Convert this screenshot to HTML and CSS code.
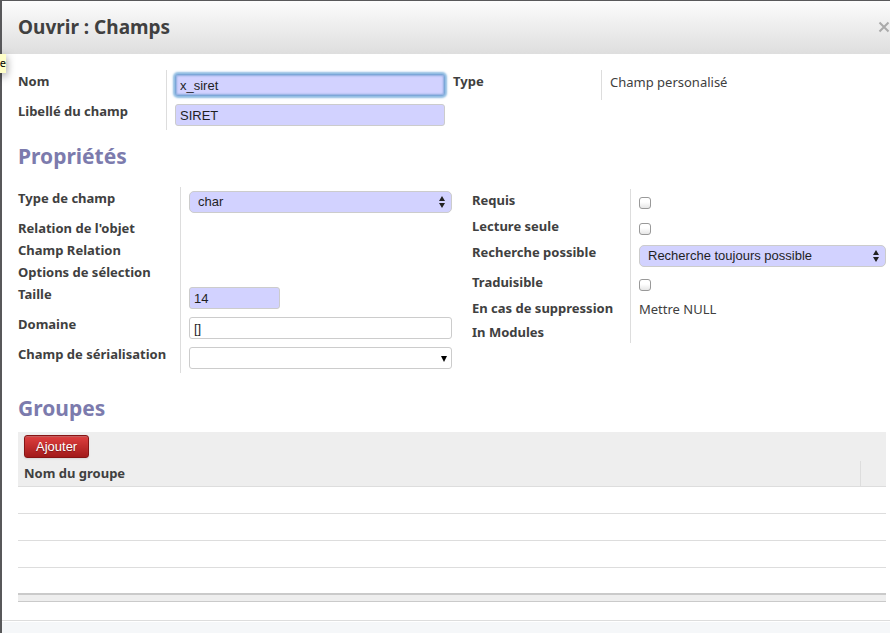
FILE: index.html
```html
<!DOCTYPE html>
<html lang="fr">
<head>
<meta charset="utf-8">
<title>Ouvrir : Champs</title>
<link rel="stylesheet" href="styles.css">
</head>
<body>
<div class="tooltip">e</div>
<main class="dialog">
  <header class="dialog-header">
    <h1>Ouvrir : Champs</h1>
    <button class="close" type="button" aria-label="Fermer">
      <svg width="12" height="12" viewBox="0 0 12 12"><path d="M1.5 1.5l9 9M10.5 1.5l-9 9" stroke="#aaa" stroke-width="2" fill="none"/></svg>
    </button>
  </header>

  <form class="content">
    <div class="columns identity">
      <div class="group">
        <div class="row"><label for="name">Nom</label><div class="cell"><input class="field required active" id="name" type="text" value="x_siret"></div></div>
        <div class="row"><label for="caption">Libellé du champ</label><div class="cell"><input class="field required" id="caption" type="text" value="SIRET"></div></div>
      </div>
      <div class="group">
        <div class="row"><span class="label">Type</span><div class="cell"><span class="value">Champ personalisé</span></div></div>
      </div>
    </div>

    <h2>Propriétés</h2>
    <div class="columns properties">
      <div class="group">
        <div class="row"><label for="type">Type de champ</label><div class="cell"><div class="picker"><select class="field required" id="type"><option>char</option></select><svg class="arrows" width="6" height="12" viewBox="0 0 6 12"><path d="M0 5l3-5 3 5zM0 7h6l-3 5z" fill="#222"/></svg></div></div></div>
        <div class="row compact"><span class="label">Relation de l'objet</span><div class="cell"></div></div>
        <div class="row compact"><span class="label">Champ Relation</span><div class="cell"></div></div>
        <div class="row compact"><span class="label">Options de sélection</span><div class="cell"></div></div>
        <div class="row"><label for="size">Taille</label><div class="cell"><input class="field required short" id="size" type="text" value="14"></div></div>
        <div class="row"><label for="domain">Domaine</label><div class="cell"><input class="field" id="domain" type="text" value="[]"></div></div>
        <div class="row"><label for="serial">Champ de sérialisation</label><div class="cell"><div class="picker"><input class="field" id="serial" type="text"><button class="drop" type="button" aria-label="Ouvrir la liste"><svg width="6" height="6" viewBox="0 0 6 6"><path d="M0 0h6l-3 6z" fill="#000"/></svg></button></div></div></div>
      </div>
      <div class="group options">
        <div class="row check"><label for="required">Requis</label><div class="cell"><input class="box" id="required" type="checkbox"></div></div>
        <div class="row check"><label for="readonly">Lecture seule</label><div class="cell"><input class="box" id="readonly" type="checkbox"></div></div>
        <div class="row"><label for="search">Recherche possible</label><div class="cell"><div class="picker"><select class="field required" id="search"><option>Recherche toujours possible</option></select><svg class="arrows" width="6" height="12" viewBox="0 0 6 12"><path d="M0 5l3-5 3 5zM0 7h6l-3 5z" fill="#222"/></svg></div></div></div>
        <div class="row check"><label for="translate">Traduisible</label><div class="cell"><input class="box" id="translate" type="checkbox"></div></div>
        <div class="row text"><span class="label">En cas de suppression</span><div class="cell"><span class="value">Mettre NULL</span></div></div>
        <div class="row compact"><span class="label">In Modules</span><div class="cell"></div></div>
      </div>
    </div>

    <h2>Groupes</h2>
    <div class="toolbar"><button class="add" type="button">Ajouter</button></div>
    <table>
      <thead><tr><th>Nom du groupe</th><th class="actions"></th></tr></thead>
      <tbody>
        <tr><td colspan="2"></td></tr>
        <tr><td colspan="2"></td></tr>
        <tr><td colspan="2"></td></tr>
        <tr><td colspan="2"></td></tr>
      </tbody>
      <tfoot><tr><td colspan="2"></td></tr></tfoot>
    </table>
  </form>
  <footer class="dialog-footer"></footer>
</main>
</body>
</html>
```
FILE: styles.css
```css
* { box-sizing: border-box; }

body {
  margin: 0;
  overflow: hidden;
  color: #404040;
  font: 13px/22px "Noto Sans", sans-serif;
}

.dialog {
  display: flex;
  flex-direction: column;
  min-height: 100vh;
  border-top: 1px solid #58585a;
  border-left: 2px solid #58585a;
  background: #fff;
}

.dialog-header {
  display: flex;
  align-items: center;
  justify-content: space-between;
  height: 53px;
  padding: 0 0 2px 16px;
  background: linear-gradient(#fcfcfc, #dedede);
}

h1 {
  margin: 0;
  font-size: 19px;
  line-height: 26px;
}

.close {
  display: flex;
  padding: 0;
  border: 0;
  background: none;
}

.tooltip {
  position: absolute;
  top: 54px;
  left: 0;
  width: 6px;
  height: 19px;
  overflow: visible;
  background: #ffffc8;
  box-shadow: 0 3px 8px rgba(0, 0, 0, .5);
  color: #000;
  font-size: 11px;
  line-height: 18px;
  direction: rtl;
}

.content {
  flex: 1;
  padding: 16px 4px 18px 16px;
}

.columns {
  display: grid;
  align-items: start;
}

.identity {
  --label: 148px;
  grid-template-columns: 427fr 433fr;
  column-gap: 8px;
}

.properties {
  --label: 162px;
  grid-template-columns: 434fr 414fr;
  column-gap: 20px;
}

.options {
  --label: 158px;
  padding-top: 2px;
}

.row {
  display: grid;
  grid-template-columns: var(--label) 1fr;
  min-height: 30px;
}

.row.check { min-height: 26px; }
.row.text { min-height: 24px; }
.row.compact { min-height: 22px; }

label, .label {
  font-weight: bold;
  white-space: nowrap;
}

.cell {
  padding-left: 8px;
  border-left: 1px solid #ddd;
}

.value {
  display: block;
  line-height: 24px;
}

.field {
  display: block;
  width: 100%;
  height: 22px;
  margin: 4px 0 0;
  padding: 0 4px;
  border: 1px solid #ccc;
  border-radius: 3px;
  background: #fff;
  color: #1f1f1f;
  font: 13px "Liberation Sans", sans-serif;
  appearance: none;
}

.required { background: #d2d2ff; }
.short { width: 91px; }

.active {
  border-color: #7ca7d8;
  outline: none;
  box-shadow: 0 0 2px 2px #8fbce2, inset 0 0 2px 1px #8caddd;
}

select.field {
  padding: 0 8px 2px;
  border-radius: 5px;
}

.picker { position: relative; }

.arrows {
  position: absolute;
  top: 5px;
  right: 7px;
}

.drop {
  position: absolute;
  top: 9px;
  right: 5px;
  display: flex;
  padding: 0;
  border: 0;
  background: none;
}

.box {
  display: block;
  width: 12px;
  height: 12px;
  margin: 8px 0 0;
  border: 1px solid #999;
  border-radius: 3px;
  background: linear-gradient(#fff 40%, #e6e6e6);
  appearance: none;
}

h2 {
  margin: 12px 0 17px;
  color: #7c7bad;
  font-size: 21px;
  line-height: 28px;
}

.properties + h2 {
  margin: 21px 0 10px;
}

.toolbar {
  padding: 3px 6px;
  background: #eee;
}

.add {
  display: block;
  height: 23px;
  padding: 0 11px;
  border: 1px solid #861414;
  border-radius: 3px;
  background: linear-gradient(#df3f3f, #a21a1a);
  box-shadow: 0 1px 2px rgba(0, 0, 0, .1), inset 0 1px 1px rgba(155, 155, 155, .4);
  color: #fff;
  font: 13px "Liberation Sans", sans-serif;
  text-shadow: 0 1px 1px rgba(0, 0, 0, .3);
}

table {
  width: 100%;
  border-spacing: 0;
}

th {
  height: 26px;
  padding: 0 6px;
  border-bottom: 1px solid #ddd;
  background: #eee;
  line-height: 25px;
  text-align: left;
}

.actions {
  width: 26px;
  border-left: 1px solid #ddd;
}

td {
  height: 27px;
  padding: 0;
  border-bottom: 1px solid #ddd;
}

tbody tr:last-child td {
  height: 25px;
  border-bottom: 0;
}

tfoot td {
  height: 9px;
  border-top: 2px solid #cacaca;
  border-bottom: 1px solid #cacaca;
  background: #eee;
}

.dialog-footer {
  height: 13px;
  border-top: 1px solid #ddd;
  background: #f5f7f9;
  box-shadow: inset 0 1px #fff;
}
```
